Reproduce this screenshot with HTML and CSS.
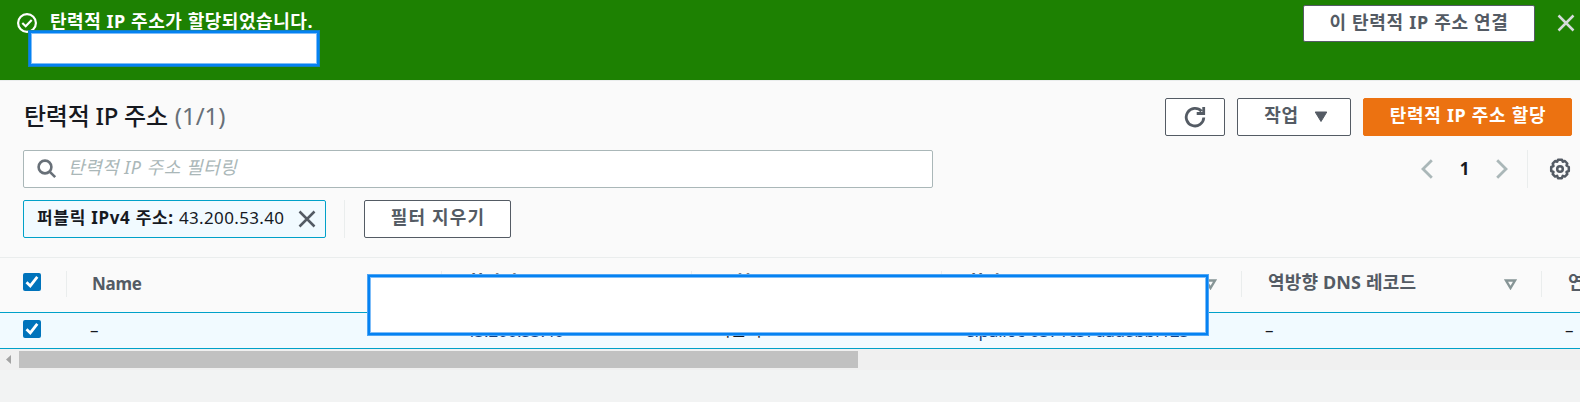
FILE: index.html
```html
<!DOCTYPE html>
<html lang="ko">
<head>
<meta charset="utf-8">
<title>탄력적 IP 주소</title>
<link rel="stylesheet" href="styles.css">
</head>
<body>
<section class="flash">
  <svg class="flash-icon" width="20" height="20" viewBox="0 0 20 20"><circle cx="10" cy="10" r="8.9"/><path d="M5.300 10l3.400 3.200 6-6.200"/></svg>
  <h2 class="flash-title">탄력적 IP 주소가 할당되었습니다.</h2>
  <button class="btn flash-btn">이 탄력적 IP 주소 연결</button>
  <svg class="flash-close" width="18" height="18" viewBox="0 0 18 18"><path d="M1.5 1.5l15 15M16.5 1.5l-15 15"/></svg>
  <div class="mask mask-flash"></div>
</section>
<main class="panel">
  <header class="head">
    <h1 class="title"><span class="title-name">탄력적 IP 주소</span> <span class="count">(1/1)</span></h1>
    <div class="actions">
      <button class="btn refresh"><svg width="22" height="22" viewBox="0 0 22 22"><path d="M19.800 11.500a8.800 8.800 0 1 1-2.300-6.300M19.700 1v6.500h-7"/></svg></button>
      <button class="btn menu"><span>작업</span><svg width="14" height="12" viewBox="0 0 14 12"><path d="M1.200 1h11.600L7 10.500z"/></svg></button>
      <button class="btn primary">탄력적 IP 주소 할당</button>
    </div>
  </header>
  <div class="filter">
    <div class="search">
      <svg width="20" height="20" viewBox="0 0 20 20"><circle cx="8" cy="8" r="6.4"/><path d="M12.6 12.6l5.6 5.6"/></svg>
      <span class="placeholder">탄력적 IP 주소 필터링</span>
    </div>
    <nav class="pages">
      <svg width="12" height="20" viewBox="0 0 12 20"><path d="M10.800 1.200L2 10l8.800 8.800"/></svg>
      <b class="page">1</b>
      <svg width="12" height="20" viewBox="0 0 12 20"><path d="M1.200 1.200L10 10l-8.800 8.800"/></svg>
      <i class="rule"></i>
      <svg class="gear" width="22" height="22" viewBox="0 0 22 22"><path d="M9 1.800h4l.8 2 2.100-.8 2.400 2.500-.8 2 2.300 1.500v4l-2.300 1 .8 2.200-2.500 2.400-2-.8-1 2.400H9l-.8-2.400-2.100.8-2.400-2.500.8-2.100-2.300-1V9l2.300-1-.8-2.300L6.100 3l2.100.8z"/><circle cx="11" cy="11" r="2.800"/></svg>
    </nav>
  </div>
  <div class="tokens">
    <div class="token"><span class="token-text"><b>퍼블릭 IPv4 주소:</b> <span class="ip">43.200.53.40</span></span><svg width="18" height="18" viewBox="0 0 18 18"><path d="M1.5 1.5l15 15M16.5 1.5l-15 15"/></svg></div>
    <i class="rule"></i>
    <button class="btn clear">필터 지우기</button>
  </div>
  <div class="table">
    <div class="row labels">
      <div class="cell check"><svg class="box" width="18" height="18" viewBox="0 0 18 18"><path d="M3.5 9.2l3.8 3.7 7-9"/></svg></div>
      <div class="cell"><span class="name">Name</span></div>
      <div class="cell">할당된 IPv4 주소</div>
      <div class="cell">유형</div>
      <div class="cell">할당 ID<svg class="sort" width="13" height="11" viewBox="0 0 13 11"><path d="M2 1.500h9L6.500 9z"/></svg></div>
      <div class="cell"><span class="dns">역방향 DNS 레코드</span><svg class="sort" width="13" height="11" viewBox="0 0 13 11"><path d="M2 1.500h9L6.500 9z"/></svg></div>
      <div class="cell">연</div>
    </div>
    <div class="row record">
      <div class="cell check"><svg class="box" width="18" height="18" viewBox="0 0 18 18"><path d="M3.5 9.2l3.8 3.7 7-9"/></svg></div>
      <div class="cell">–</div>
      <div class="cell link">43.200.53.40</div>
      <div class="cell">퍼블릭 IP</div>
      <div class="cell link">eipalloc-0371c37dad8bbf123</div>
      <div class="cell">–</div>
      <div class="cell">–</div>
    </div>
    <div class="mask mask-table"></div>
  </div>
  <div class="scroll"><svg width="19" height="17" viewBox="0 0 19 17"><path d="M11 4v9L6 8.500z"/></svg><div class="thumb"></div></div>
</main>
</body>
</html>
```
FILE: styles.css
```css
* { box-sizing: border-box; }
body {
  margin: 0;
  width: 1580px;
  height: 402px;
  overflow: hidden;
  background: #f2f3f3;
  color: #16191f;
  font: 18px/24px "Noto Sans", "Noto Sans CJK KR", sans-serif;
}
h1, h2 { margin: 0; }
svg { display: block; flex: none; fill: none; stroke: #545b64; stroke-width: 2; }
.btn {
  display: flex;
  align-items: center;
  justify-content: center;
  height: 38px;
  padding: 0 0 4px;
  border: 1px solid #545b64;
  border-radius: 2px;
  background: #fff;
  color: #545b64;
  font: bold 18px/24px "Noto Sans", "Noto Sans CJK KR", sans-serif;
  letter-spacing: 0.7px;
  white-space: nowrap;
}
.flash {
  position: relative;
  display: flex;
  align-items: flex-start;
  height: 80px;
  padding: 5px 5px 0 17px;
  background: #1d8102;
}
.flash-icon { margin-top: 8px; stroke: #fff; stroke-width: 2.2; }
.flash-title {
  flex: 1;
  margin: 4px 0 0 13px;
  color: #fff;
  font-size: 18px;
  line-height: 24px;
  letter-spacing: 0.55px;
  white-space: nowrap;
}
.flash-btn { width: 232px; height: 37px; }
.flash-close { margin: 9px 0 0 22px; stroke: #d5dbdb; stroke-width: 2.5; }
.mask {
  position: absolute;
  border: 2px solid #0582f2;
  background: #fff;
  box-shadow: 0 0 0 1px #4ea5f5, inset 0 0 0 1px #7fbdf8;
}
.mask-flash { left: 29px; top: 31px; width: 290px; height: 35px; box-shadow: 0 0 0 1px #1281bd, inset 0 0 0 1px #7fbdf8; }
.mask-table { left: 368px; top: 17px; width: 840px; height: 60px; }
.panel { background: #fafafa; }
.head {
  display: flex;
  align-items: center;
  justify-content: space-between;
  height: 70px;
  padding: 3px 8px 0 24px;
  border-top: 1px solid #eaeded;
}
.title { display: flex; gap: 7px; margin-top: -3px; font-size: 24px; line-height: 30px; white-space: nowrap; }
.title-name { font-weight: 500; letter-spacing: -0.25px; }
.count { color: #687078; font-weight: 400; }
.actions { display: flex; gap: 12px; }
.refresh { width: 60px; padding: 0; }
.refresh svg { stroke-width: 2.8; }
.menu { width: 114px; gap: 15px; padding-left: 4px; }
.menu svg { margin-top: 4px; fill: #545b64; stroke-width: 1; }
.primary { width: 209px; padding-left: 1px; border-color: #ec7211; background: #ec7211; color: #fff; }
.filter {
  display: flex;
  justify-content: space-between;
  height: 38px;
  padding: 0 9px 0 23px;
}
.search {
  display: flex;
  align-items: center;
  width: 910px;
  padding-left: 13px;
  border: 1px solid #aab7b8;
  border-radius: 2px;
  background: #fff;
}
.search svg { stroke: #687078; stroke-width: 2.6; }
.placeholder { margin: -4px 0 0 11px; color: #aab7b8; font-style: italic; letter-spacing: 0.5px; white-space: nowrap; }
.pages { display: flex; align-items: center; }
.pages svg { stroke: #aab7b8; stroke-width: 2.8; }
.page { width: 63px; text-align: center; font-size: 17px; }
.rule { width: 1px; height: 38px; background: #eaeded; }
.pages .rule { margin: 0 21px 0 19px; }
.pages .gear { stroke: #545b64; stroke-linejoin: round; stroke-width: 2.5; }
.tokens {
  display: flex;
  align-items: center;
  height: 69px;
  padding: 12px 0 19px 23px;
}
.token {
  display: flex;
  align-items: center;
  justify-content: space-between;
  width: 303px;
  height: 38px;
  padding: 0 9px 0 13px;
  border: 1px solid #00a1c9;
  border-radius: 2px;
  background: #f1faff;
  white-space: nowrap;
}
.token-text { margin-top: -2px; font-size: 17px; letter-spacing: 0.7px; }
.ip { letter-spacing: 0.35px; }
.token svg { stroke-width: 2.5; }
.tokens .rule { margin: 0 19px 0 18px; }
.clear { width: 147px; padding-left: 1px; letter-spacing: 1.2px; }
.table { position: relative; border-top: 1px solid #eaeded; overflow: hidden; }
.row {
  display: grid;
  grid-template-columns: 66px 375px 250px 250px 300px 300px 39px;
  width: 1580px;
}
.cell { display: flex; align-items: center; padding: 0 0 0 24px; white-space: nowrap; }
.labels { height: 54px; padding: 13px 0 14px; color: #545b64; font-weight: 700; }
.labels .cell { height: 26px; padding: 0 24px 4px 26px; }
.labels .cell:last-child { width: 39px; padding-right: 0; overflow: hidden; }
.labels .cell + .cell { border-left: 1px solid #eaeded; }
.row .check { padding: 0 0 4px 23px; }
.name { padding: 3px 0 0; font-size: 17px; letter-spacing: -0.3px; margin-left: -1px; }
.dns { letter-spacing: 0.15px; }
.sort { margin: 4px 0 0 auto; stroke: #879596; stroke-width: 2.4; }
.box { border-radius: 2px; background: #0073bb; stroke: #fff; stroke-width: 2.8; }
.record { height: 37px; border: solid #00a1c9; border-width: 1px 0; background: #f1faff; }
.record .cell { padding-bottom: 2px; font-size: 17px; }
.record .check { padding-bottom: 4px; }
.record .link { padding-bottom: 0; color: #16417f; letter-spacing: -0.2px; }
.scroll { display: flex; height: 21px; padding-top: 2px; background: #f0f0f0; }
.scroll svg { fill: #a3a3a3; stroke: none; }
.thumb { width: 839px; height: 17px; background: #c1c1c1; }
```
